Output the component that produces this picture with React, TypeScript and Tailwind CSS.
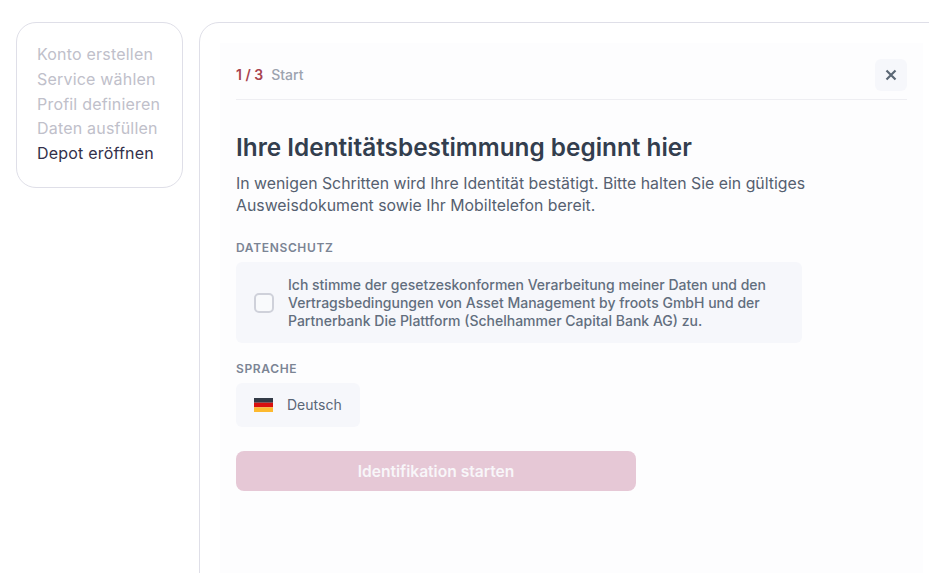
export default function App() {
  const steps = ["Konto erstellen", "Service wählen", "Profil definieren", "Daten ausfüllen"];
  return (
    <div className="h-[573px] w-[929px] overflow-hidden bg-white flex items-start gap-4 pl-4 pt-[22px] font-['Inter',sans-serif] text-[#4b5563]">
      <aside className="w-[167px] h-[166px] shrink-0 rounded-[20px] border border-[#dfdfe8] pl-5 pt-[19px] font-['Inter',sans-serif] text-[16px] tracking-[0.2px] leading-[24.8px] text-[#c0c0ca]">
        {steps.map((s) => (
          <div key={s}>{s}</div>
        ))}
        <div className="text-[#33304a]">Depot eröffnen</div>
      </aside>
      <main className="w-[740px] h-[600px] shrink-0 rounded-tl-[20px] border border-[#dfdfe8] pl-5 pt-5">
        <section className="w-[703px] h-[560px] bg-[#fdfdfe] px-4 pt-4">
          <header className="flex items-center justify-between h-[41px] border-b border-[#eeeef2] pb-2">
            <div className="flex items-center gap-2 text-[14px] -translate-y-px">
              <span className="font-semibold text-[#a8434f]">1 / 3</span>
              <span className="font-medium text-[#9ca3af]">Start</span>
            </div>
            <button className="w-8 h-8 rounded-md bg-[#f6f7fb] flex items-center justify-center">
              <svg width="12" height="12" viewBox="0 0 12 12" fill="none" stroke="#5b6775" strokeWidth="2.2">
                <path d="M1.5 1.5l9 9M10.5 1.5l-9 9" />
              </svg>
            </button>
          </header>
          <h1 className="mt-[30px] text-[24.35px] leading-[34px] font-semibold text-[#333e4e]">Ihre Identitätsbestimmung beginnt hier</h1>
          <p className="mt-[9px] w-[600px] text-[15.85px] leading-[22px] text-[#556070]">
            In wenigen Schritten wird Ihre Identität bestätigt. Bitte halten Sie ein gültiges Ausweisdokument sowie Ihr Mobiltelefon bereit.
          </p>
          <h2 className="mt-[23px] text-[12px] leading-[16px] font-semibold tracking-[0.65px] text-[#7b8494]">DATENSCHUTZ</h2>
          <div className="mt-[6px] w-[566px] h-[81px] rounded-md bg-[#f6f7fb] flex items-center pl-[18px]">
            <span className="w-5 h-5 shrink-0 rounded-[5px] border-2 border-[#cfd1da] bg-white/40" />
            <p className="ml-[14px] w-[500px] text-[14px] leading-[18px] font-medium text-[#626e7e]">
              Ich stimme der gesetzeskonformen Verarbeitung meiner Daten und den Vertragsbedingungen von Asset Management by froots GmbH und der Partnerbank Die Plattform (Schelhammer Capital Bank AG) zu.
            </p>
          </div>
          <h2 className="mt-[18px] text-[12px] leading-[16px] font-semibold tracking-[0.65px] text-[#7b8494]">SPRACHE</h2>
          <div className="mt-[6px] w-[124px] h-[44px] rounded-md bg-[#f6f7fb] flex items-center pl-[18px] gap-[14px]">
            <svg width="19" height="14" viewBox="0 0 19 14" className="shrink-0">
              <rect width="19" height="4.7" fill="#333b47" />
              <rect y="4.7" width="19" height="4.6" fill="#d9100f" />
              <rect y="9.3" width="19" height="4.7" fill="#fdb92e" />
            </svg>
            <span className="text-[14px] font-normal text-[#5a6677] pb-[2px]">Deutsch</span>
          </div>
          <button className="mt-6 block w-[400px] h-10 rounded-lg bg-[#e6c8d6] pt-[2px] text-[15.6px] font-semibold text-[#f8f6f9]">
            Identifikation starten
          </button>
        </section>
      </main>
    </div>
  );
}
